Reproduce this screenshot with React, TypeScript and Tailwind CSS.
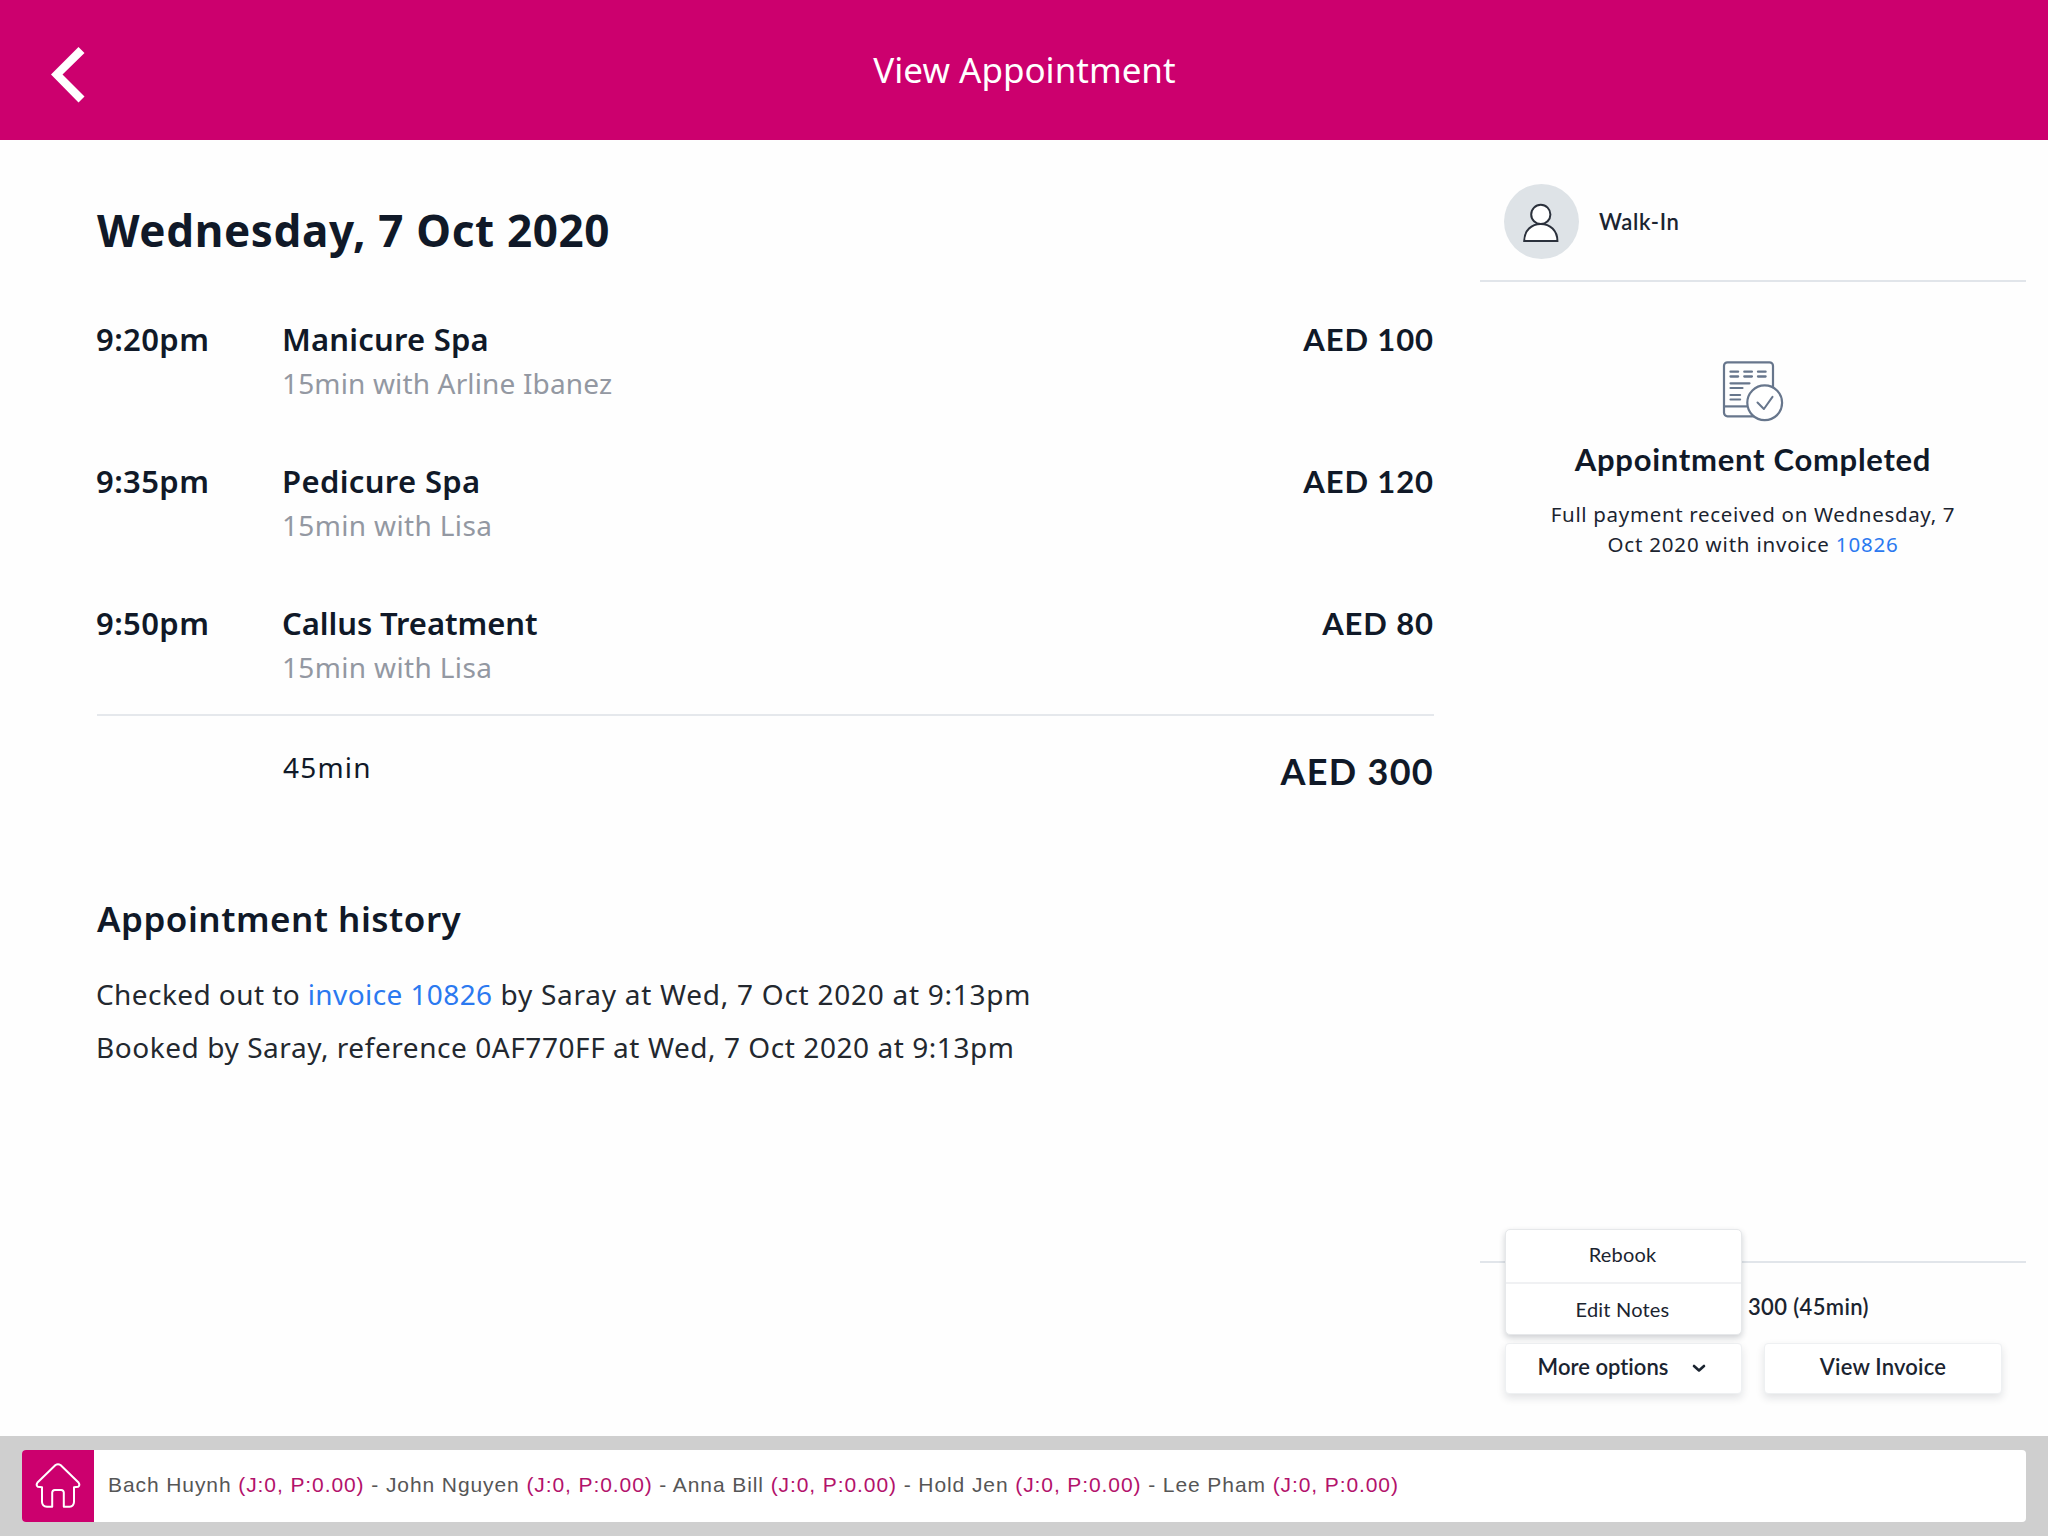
import React from 'react';

const services = [
  { time: '9:20pm', name: 'Manicure Spa', detail: '15min with Arline Ibanez', price: 'AED 100', nameFit: 'tracking-[0.2px]', detailFit: 'tracking-[0.15px]' },
  { time: '9:35pm', name: 'Pedicure Spa', detail: '15min with Lisa', price: 'AED 120', nameFit: 'tracking-[0.35px]', detailFit: 'tracking-[0.35px]' },
  { time: '9:50pm', name: 'Callus Treatment', detail: '15min with Lisa', price: 'AED 80', nameFit: 'tracking-[-0.07px]', detailFit: 'tracking-[0.35px]' },
];

const staff = ['Bach Huynh', 'John Nguyen', 'Anna Bill', 'Hold Jen', 'Lee Pham'];

function BackIcon() {
  return (
    <svg width="34" height="56" viewBox="0 0 34 56" fill="none" aria-hidden="true">
      <path d="M27.5 0 L33.5 6 L11.5 27.5 L33.5 49.5 L27.5 55.5 L0 27.5 Z" fill="#fff" />
    </svg>
  );
}

function PersonIcon() {
  return (
    <svg width="36" height="40" viewBox="0 0 36 40" aria-hidden="true">
      <g fill="#fff" stroke="#2b313c" strokeWidth="2">
        <circle cx="17.8" cy="11.4" r="9.6" />
        <path d="M1.2 38 C1.2 27.5 8.5 21 17.8 21 C27 21 34.4 27.5 34.4 38 Z" strokeLinejoin="miter" />
      </g>
    </svg>
  );
}

function InvoiceDoneIcon() {
  return (
    <svg width="62" height="62" viewBox="0 0 62 62" fill="none" stroke="#67768c" aria-hidden="true">
      <rect x="2" y="1.3" width="49" height="54" rx="3.5" strokeWidth="2.2" />
      <path d="M2 45.4 H27" strokeWidth="2.2" />
      <path d="M8.5 10.7 h7.6 M22.3 10.7 h7.6 M36 10.7 h7.6 M8.5 15.5 h7.6 M22.3 15.5 h7.6 M36 15.5 h7.6" strokeWidth="2.3" strokeLinecap="round" />
      <path d="M8.5 22.3 h19 M8.5 27 h12 M8.5 34 h9.6 M8.5 38.5 h9.6" strokeWidth="2.2" strokeLinecap="round" />
      <circle cx="42.7" cy="41.8" r="17.4" fill="#fff" strokeWidth="2.2" />
      <path d="M35.5 41.5 L41.9 48 L50.5 35.8" strokeWidth="2" strokeLinecap="round" strokeLinejoin="round" />
    </svg>
  );
}

function HomeIcon() {
  return (
    <svg width="46" height="46" viewBox="0 0 46 46" fill="none" stroke="#fff" strokeWidth="2" strokeLinejoin="round" aria-hidden="true">
      <path d="M20.5 2 Q23 0.3 25.5 2 L43.5 19.5 Q45.3 22.2 43.2 23.8 L39 24.2 V39 Q38.8 43.3 34.5 43.8 H28.8 V29.5 Q28.6 27.2 26.2 27 H19.8 Q17.4 27.2 17.2 29.5 V43.8 H12 Q7.2 43.3 7 39 V24.2 L2.8 23.8 Q0.7 22.2 2.5 19.5 Z" />
    </svg>
  );
}

function Header() {
  return (
    <header className="relative flex h-[140px] shrink-0 items-center justify-center bg-[#cc006e]">
      <button className="absolute left-[51px] top-[47px]" aria-label="Back">
        <BackIcon />
      </button>
      <h1 className="mt-[-1px] ml-px text-[35px] leading-[48px] text-white">View Appointment</h1>
    </header>
  );
}

function Details() {
  return (
    <section className="ml-[97px] w-[1337px] shrink-0 pt-[62px] text-[#101928]">
      <h2 className="text-[44px] font-bold leading-[56px] tracking-[0.65px]">Wednesday, 7 Oct 2020</h2>
      <ul className="mt-[61px] flex flex-col gap-[60px] border-b-2 border-[#e5e8ec] pb-[29px]">
        {services.map((s) => (
          <li key={s.name} className="flex h-[82px] items-start">
            <span className="ml-[-1px] w-[186px] shrink-0 text-[31px] font-semibold leading-10 tracking-[0.4px]">{s.time}</span>
            <div className="flex grow flex-col gap-[6px]">
              <span className={`text-[31px] font-semibold leading-10 ${s.nameFit}`}>{s.name}</span>
              <span className={`text-[28px] leading-9 text-[#9398a2] ${s.detailFit}`}>{s.detail}</span>
            </div>
            <span className="font-['Lato',sans-serif] text-[31px] font-bold leading-10 tracking-[0.9px]">{s.price}</span>
          </li>
        ))}
      </ul>
      <div className="mt-[33px] flex items-start justify-between pl-[186px]">
        <span className="text-[28px] leading-9 tracking-[1.2px]">45min</span>
        <span className="font-['Lato',sans-serif] text-[36px] font-bold leading-[44px] tracking-[1.3px]">AED 300</span>
      </div>
      <h3 className="mt-[104px] text-[35px] font-semibold leading-[44px] tracking-[0.5px]">Appointment history</h3>
      <div className="mt-[27px] text-[28px] leading-[53px] tracking-[0.56px] text-[#23282f]">
        <p className="ml-[-1px] tracking-[0.74px]">
          <span className="tracking-[0.42px]">
            Checked out to <a className="tracking-[0.4px] text-[#2b79f0]">invoice 10826</a>
          </span>{' '}
          by Saray at Wed, 7 Oct 2020 at 9:13pm
        </p>
        <p className="ml-[-1px]">Booked by Saray, reference 0AF770FF at Wed, 7 Oct 2020 at 9:13pm</p>
      </div>
    </section>
  );
}

function Sidebar() {
  return (
    <aside className="ml-auto mr-[22px] flex w-[546px] flex-col text-[#1b2430]">
      <div className="flex h-[142px] items-center gap-5 border-b-2 border-[#e1e5ea] pl-6 pt-[23px]">
        <div className="flex size-[75px] items-center justify-center rounded-full bg-[#dee3e7] pt-[2px] pr-[2px]">
          <PersonIcon />
        </div>
        <span className="font-['Lato',sans-serif] text-[22px] font-semibold leading-8 tracking-[0.69px]">Walk-In</span>
      </div>
      <div className="flex flex-col items-center pt-[79px]">
        <InvoiceDoneIcon />
        <h2 className="mt-[16px] font-['Lato',sans-serif] text-[31px] font-bold leading-10 tracking-[0.72px] text-[#101928]">Appointment Completed</h2>
        <p className="mt-[20px] text-center text-[20.5px] leading-[30px] tracking-[0.67px]">
          Full payment received on Wednesday, 7<br />
          <span className="tracking-[0.82px]">Oct 2020 with invoice <a className="text-[#2b79f0]">10826</a></span>
        </p>
      </div>
      <div className="mt-auto h-[175px] border-t-2 border-[#e1e5ea] pl-[25px] font-['Lato',sans-serif]">
        <p className="ml-[243px] mt-[28px] text-[22px] font-semibold leading-8 tracking-[0.36px]">300 (45min)</p>
        <div className="mt-[20px] flex gap-[22px]">
          <div className="relative">
            <button className="flex h-[51px] w-[237px] items-center justify-center gap-6 rounded border border-[#eef0f2] bg-white pb-1 pr-[3px] text-[22px] font-semibold tracking-[0.02px] shadow-[0_4px_8px_rgba(16,25,40,0.12)]">
              More options
              <svg className="mt-[3px]" width="14" height="9" viewBox="0 0 14 9" fill="none" stroke="#1b2430" strokeWidth="2.6" strokeLinecap="round" strokeLinejoin="round" aria-hidden="true">
                <path d="M2 2 L7 6.5 L12 2" />
              </svg>
            </button>
            <div className="absolute bottom-[59px] left-0 flex h-[106px] w-[237px] flex-col rounded-[5px] border border-[#e6e8ea] bg-white text-center text-[20px] tracking-[0.2px] shadow-[0_3px_6px_rgba(16,25,40,0.2)]">
              <span className="h-[54px] border-b-2 border-[#f0f1f3] pr-[2px] pt-[8px] leading-[32px]">Rebook</span>
              <span className="pr-[2px] pt-[9px] leading-[32px]">Edit Notes</span>
            </div>
          </div>
          <button className="h-[51px] w-[238px] rounded border border-[#eef0f2] bg-white pb-1 text-[22px] font-semibold tracking-[0.19px] shadow-[0_4px_8px_rgba(16,25,40,0.12)]">View Invoice</button>
        </div>
      </div>
    </aside>
  );
}

function Footer() {
  return (
    <footer className="h-[100px] shrink-0 bg-[#cfcfcf] px-[22px] pt-[14px]">
      <div className="flex h-[72px] items-center overflow-hidden rounded bg-white">
        <div className="flex h-full w-[72px] items-center justify-center bg-[#cc006e]">
          <HomeIcon />
        </div>
        <p className="ml-[14px] mt-[-2px] whitespace-nowrap font-['Liberation_Sans',sans-serif] text-[21px] leading-7 tracking-[0.91px] text-[#565656]">
          {staff.map((name, i) => (
            <React.Fragment key={name}>
              {i > 0 && ' - '}
              {name} <span className="text-[#b3126b]">(J:0, P:0.00)</span>
            </React.Fragment>
          ))}
        </p>
      </div>
    </footer>
  );
}

export default function App() {
  return (
    <div className="flex h-[1536px] w-[2048px] flex-col overflow-hidden bg-[#fefefe] font-['Noto_Sans',sans-serif]">
      <Header />
      <main className="flex min-h-0 grow">
        <Details />
        <Sidebar />
      </main>
      <Footer />
    </div>
  );
}
